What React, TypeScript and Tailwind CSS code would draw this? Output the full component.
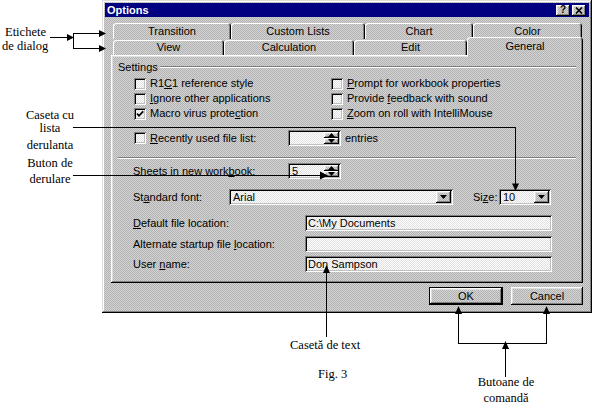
import React from 'react';

// win95-ish surfaces (dithered like the scanned figure)
const face = 'bg-[#c3c3c3] bg-[image:repeating-conic-gradient(#d3d3d3_0_25%,#b3b3b3_0_50%)] bg-[length:2px_2px]';
const field = 'bg-[#f1f1f1] bg-[image:repeating-conic-gradient(#ffffff_0_25%,#e0e0e0_0_50%)] bg-[length:2px_2px]';
const sunken = 'shadow-[inset_1px_1px_0_#808080,inset_-1px_-1px_0_#ffffff,inset_2px_2px_0_#000000,inset_-2px_-2px_0_#c0c0c0]';
const raised = 'shadow-[inset_-1px_-1px_0_#000000,inset_1px_1px_0_#ffffff,inset_-2px_-2px_0_#808080,inset_2px_2px_0_#dfdfdf]';
const tab = 'flex items-center justify-center rounded-t-[3px] shadow-[inset_1px_1px_0_#ffffff,inset_-1px_0_0_#000000,inset_-2px_0_0_#808080]';

const U = ({ children }: { children: React.ReactNode }) => (
    <span className="underline underline-offset-[1px]">{children}</span>
);

function Box({ on = false }: { on?: boolean }) {
    return (
        <span className={`flex w-[12px] h-[12px] shrink-0 ${field} ${sunken}`}>
            {on && (
                <svg width="12" height="12" viewBox="0 0 12 12">
                    <path d="M3 5.5 5 7.8 9.2 3.4" stroke="#000" strokeWidth="1.7" fill="none" />
                </svg>
            )}
        </span>
    );
}

const Opt = ({ on, children }: { on?: boolean; children: React.ReactNode }) => (
    <div className="flex items-center gap-[4px] h-[15px]">
        <Box on={on} />
        <span>{children}</span>
    </div>
);

const Tri = ({ up = false }: { up?: boolean }) => (
    <svg width="7" height="4" viewBox="0 0 7 4">
        <path d={up ? 'M3.5 0 7 4 0 4Z' : 'M0 0 7 0 3.5 4Z'} fill="#000" />
    </svg>
);

function Spinner({ value }: { value?: string }) {
    return (
        <div className={`flex w-[53px] h-[16px] p-[2px] ${field} ${sunken}`}>
            <span className="flex-1 pl-[2px] leading-[12px]">{value}</span>
            <div className="flex flex-col w-[15px]">
                <span className={`flex h-[6px] items-center justify-center ${face} ${raised}`}>
                    <Tri up />
                </span>
                <span className={`flex h-[6px] items-center justify-center ${face} ${raised}`}>
                    <Tri />
                </span>
            </div>
        </div>
    );
}

const DropBtn = () => (
    <span className={`flex w-[15px] h-[12px] items-center justify-center ${face} ${raised}`}>
        <Tri />
    </span>
);

const Field = ({ value }: { value?: string }) => (
    <div className={`flex items-center w-[247px] h-[16px] pl-[3px] ${field} ${sunken}`}>{value}</div>
);

export default function App() {
    return (
        <div className="relative w-[593px] h-[413px] bg-white overflow-hidden font-['Liberation_Sans',Arial,sans-serif] text-[11px] text-black leading-[13px]">
            {/* dialog */}
            <div className={`ml-[102px] w-[490px] h-[313px] flex flex-col ${face} shadow-[inset_-1px_-1px_0_#000000,inset_1px_1px_0_#dfdfdf,inset_-2px_-2px_0_#808080,inset_2px_2px_0_#ffffff]`}>
                <div className="mt-[3px] mx-[3px] h-[14px] bg-[#000080] flex items-center justify-between pl-[2px] pr-[3px]">
                    <span className="font-bold text-white">Options</span>
                    <div className="flex gap-[2px]">
                        <span className={`w-[14px] h-[11px] flex items-center justify-center font-bold text-[10px] leading-[10px] ${face} ${raised}`}>?</span>
                        <span className={`w-[14px] h-[11px] flex items-center justify-center ${face} ${raised}`}>
                            <svg width="8" height="7" viewBox="0 0 8 7">
                                <path d="M1 0.5 7 6.5M7 0.5 1 6.5" stroke="#000" strokeWidth="1.6" />
                            </svg>
                        </span>
                    </div>
                </div>

                {/* tabs */}
                <div className="mt-[6px] ml-[11px] flex h-[16px]">
                    <div className={`${tab} w-[118px]`}>Transition</div>
                    <div className={`${tab} w-[134px]`}>Custom Lists</div>
                    <div className={`${tab} w-[108px]`}>Chart</div>
                    <div className={`${tab} w-[109px]`}>Color</div>
                </div>
                <div className="-mt-[2px] ml-[11px] flex items-end h-[18px]">
                    <div className={`${tab} w-[111px] h-[15px]`}>View</div>
                    <div className={`${tab} w-[130px] h-[15px]`}>Calculation</div>
                    <div className={`${tab} w-[113px] h-[15px]`}>Edit</div>
                    <div className={`relative z-10 -mb-[2px] w-[116px] h-[20px] flex justify-center pt-[3px] rounded-t-[3px] ${face} shadow-[inset_1px_1px_0_#ffffff,inset_-1px_0_0_#000000,inset_-2px_0_0_#808080]`}>
                        General
                    </div>
                </div>

                {/* General page */}
                <div className={`ml-[9px] w-[472px] h-[228px] flex flex-col pt-[6px] ${raised}`}>
                    <div className="ml-[7px] flex items-center h-[12px] w-[458px]">
                        <span>Settings</span>
                        <span className="ml-[2px] flex-1 h-[2px] border-t border-[#808080] border-b border-b-white" />
                    </div>
                    <div className="mt-[3px] ml-[23px] flex">
                        <div className="w-[197px] flex flex-col">
                            <Opt>R1<U>C</U>1 reference style</Opt>
                            <Opt><U>I</U>gnore other applications</Opt>
                            <Opt on>Macro virus prote<U>c</U>tion</Opt>
                        </div>
                        <div className="flex flex-col">
                            <Opt><U>P</U>rompt for workbook properties</Opt>
                            <Opt>Provide <U>f</U>eedback with sound</Opt>
                            <Opt><U>Z</U>oom on roll with IntelliMouse</Opt>
                        </div>
                    </div>
                    <div className="mt-[9px] ml-[23px] flex items-center h-[16px]">
                        <div className="w-[154px] flex items-center gap-[4px]">
                            <Box />
                            <span><U>R</U>ecently used file list:</span>
                        </div>
                        <Spinner />
                        <span className="ml-[4px]">entries</span>
                    </div>
                    <div className="mt-[11px] ml-[7px] w-[458px] h-[2px] border-t border-[#808080] border-b border-b-white" />
                    <div className="mt-[4px] ml-[22px] flex items-center h-[16px]">
                        <span className="w-[155px]">Sheets in new work<U>b</U>ook:</span>
                        <Spinner value="5" />
                    </div>
                    <div className="mt-[10px] ml-[22px] flex items-center h-[16px]">
                        <span className="w-[96px]">St<U>a</U>ndard font:</span>
                        <div className={`flex items-center justify-between w-[224px] h-[16px] p-[2px] pl-[4px] ${field} ${sunken}`}>
                            <span>Arial</span>
                            <DropBtn />
                        </div>
                        <span className="ml-[20px] w-[26px]">Si<U>z</U>e:</span>
                        <div className={`flex items-center justify-between w-[52px] h-[16px] p-[2px] pl-[4px] ${field} ${sunken}`}>
                            <span>10</span>
                            <DropBtn />
                        </div>
                    </div>
                    <div className="mt-[10px] ml-[22px] flex items-center h-[16px]">
                        <span className="w-[172px]"><U>D</U>efault file location:</span>
                        <Field value="C:\My Documents" />
                    </div>
                    <div className="mt-[5px] ml-[22px] flex items-center h-[16px]">
                        <span className="w-[172px]">Alternate startup file <U>l</U>ocation:</span>
                        <Field />
                    </div>
                    <div className="mt-[4px] ml-[22px] flex items-center h-[16px]">
                        <span className="w-[172px]">User <U>n</U>ame:</span>
                        <Field value="Don Sampson" />
                    </div>
                </div>

                <div className="mt-[4px] ml-[327px] flex gap-[8px]">
                    <div className="w-[74px] h-[18px] border border-black">
                        <div className={`w-full h-full flex items-center justify-center ${raised}`}>OK</div>
                    </div>
                    <div className={`w-[72px] h-[18px] flex items-center justify-center ${raised}`}>Cancel</div>
                </div>
            </div>

            {/* figure annotations */}
            <svg className="absolute left-0 top-0 pointer-events-none" width="593" height="413" viewBox="0 0 593 413" shapeRendering="crispEdges">
                <g stroke="#000" strokeWidth="1" fill="none">
                    <path d="M50 37.5H68" />
                    <path d="M73.5 33V49" />
                    <path d="M73 33.5H100M73 48.5H100" />
                    <path d="M73 127.5H515.5V184" />
                    <path d="M73 175.5H321" />
                    <path d="M326.5 271V337" />
                    <path d="M458.5 312V343.5H546.5V312" />
                    <path d="M505.5 348V377" />
                </g>
                <g fill="#000" shapeRendering="auto">
                    <path d="M74 37.5 67 34 67 41Z" />
                    <path d="M106 33.5 99 30 99 37Z" />
                    <path d="M106 48.5 99 45 99 52Z" />
                    <path d="M515.5 191 512 183.5 519 183.5Z" />
                    <path d="M328 175.5 320 171.5 320 179.5Z" />
                    <path d="M326.5 265 323 273 330 273Z" />
                    <path d="M458.5 306 455 314 462 314Z" />
                    <path d="M546.5 306 543 314 550 314Z" />
                    <path d="M505.5 341 502 349 509 349Z" />
                </g>
            </svg>
            <div className="absolute inset-0 pointer-events-none font-['Liberation_Serif','Times_New_Roman',serif] text-[12.5px] leading-[14px]">
                <span className="absolute left-[5px] top-[25px]">Etichete</span>
                <span className="absolute left-[2px] top-[39px]">de dialog</span>
                <span className="absolute left-[20px] w-[60px] text-center top-[108px]">Caseta cu</span>
                <span className="absolute left-[20px] w-[60px] text-center top-[121px]">lista</span>
                <span className="absolute left-[20px] w-[60px] text-center top-[138px]">derulanta</span>
                <span className="absolute left-[20px] w-[60px] text-center top-[156px]">Buton de</span>
                <span className="absolute left-[20px] w-[60px] text-center top-[172px]">derulare</span>
                <span className="absolute left-[290px] top-[338px]">Casetă de text</span>
                <span className="absolute left-[318px] top-[367px]">Fig. 3</span>
                <span className="absolute left-[470px] w-[72px] text-center top-[375px]">Butoane de</span>
                <span className="absolute left-[470px] w-[72px] text-center top-[391px]">comandă</span>
            </div>
        </div>
    );
}
